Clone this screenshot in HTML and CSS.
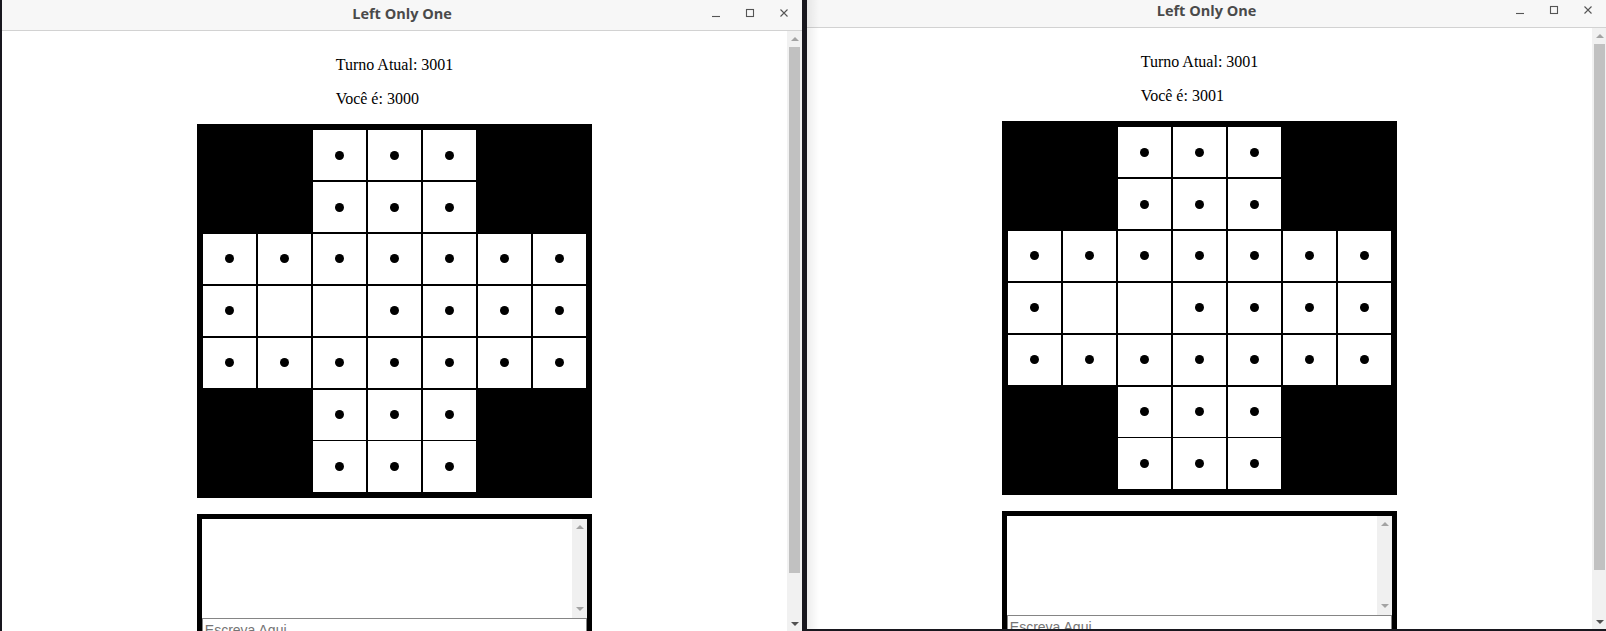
FILE: index.html
```html
<!DOCTYPE html>
<html lang="pt">
<head>
<meta charset="utf-8">
<title>Left Only One</title>
<link rel="stylesheet" href="styles.css">
</head>
<body>
<div class="desktop">

  <section class="window win-left">
    <header class="titlebar">
      <span class="tb-side"></span>
      <h1 class="title">Left Only One</h1>
      <div class="controls">
        <span class="ctl"><svg width="10" height="10" viewBox="0 0 10 10"><path d="M1 8.5H9" /></svg></span>
        <span class="ctl"><svg width="10" height="10" viewBox="0 0 10 10"><rect x="1.5" y="1.5" width="7" height="7" /></svg></span>
        <span class="ctl"><svg width="10" height="10" viewBox="0 0 10 10"><path d="M1.5 1.5L8.5 8.5M8.5 1.5L1.5 8.5" /></svg></span>
      </div>
    </header>
    <div class="viewport">
      <main class="page">
        <div class="status">
          <p>Turno Atual: 3001</p>
          <p>Você é: 3000</p>
        </div>
        <div class="board">
          <span class="cell void"></span><span class="cell void"></span><span class="cell peg"></span><span class="cell peg"></span><span class="cell peg"></span><span class="cell void"></span><span class="cell void"></span>
          <span class="cell void"></span><span class="cell void"></span><span class="cell peg"></span><span class="cell peg"></span><span class="cell peg"></span><span class="cell void"></span><span class="cell void"></span>
          <span class="cell peg"></span><span class="cell peg"></span><span class="cell peg"></span><span class="cell peg"></span><span class="cell peg"></span><span class="cell peg"></span><span class="cell peg"></span>
          <span class="cell peg"></span><span class="cell"></span><span class="cell"></span><span class="cell peg"></span><span class="cell peg"></span><span class="cell peg"></span><span class="cell peg"></span>
          <span class="cell peg"></span><span class="cell peg"></span><span class="cell peg"></span><span class="cell peg"></span><span class="cell peg"></span><span class="cell peg"></span><span class="cell peg"></span>
          <span class="cell void"></span><span class="cell void"></span><span class="cell peg"></span><span class="cell peg"></span><span class="cell peg"></span><span class="cell void"></span><span class="cell void"></span>
          <span class="cell void"></span><span class="cell void"></span><span class="cell peg"></span><span class="cell peg"></span><span class="cell peg"></span><span class="cell void"></span><span class="cell void"></span>
        </div>
        <div class="chat">
          <div class="log">
            <div class="log-text"></div>
            <div class="mini-scroll">
              <span class="arrow up light"></span>
              <span class="arrow down light"></span>
            </div>
          </div>
          <input class="msg" type="text" placeholder="Escreva Aqui">
        </div>
      </main>
      <div class="scrollbar">
        <span class="sb-btn"><span class="arrow up light"></span></span>
        <span class="thumb"></span>
        <span class="sb-fill"></span>
        <span class="sb-btn"><span class="arrow down"></span></span>
      </div>
    </div>
  </section>

  <section class="window win-right">
    <header class="titlebar">
      <span class="tb-side"></span>
      <h1 class="title">Left Only One</h1>
      <div class="controls">
        <span class="ctl"><svg width="10" height="10" viewBox="0 0 10 10"><path d="M1 8.5H9" /></svg></span>
        <span class="ctl"><svg width="10" height="10" viewBox="0 0 10 10"><rect x="1.5" y="1.5" width="7" height="7" /></svg></span>
        <span class="ctl"><svg width="10" height="10" viewBox="0 0 10 10"><path d="M1.5 1.5L8.5 8.5M8.5 1.5L1.5 8.5" /></svg></span>
      </div>
    </header>
    <div class="viewport">
      <main class="page">
        <div class="status">
          <p>Turno Atual: 3001</p>
          <p>Você é: 3001</p>
        </div>
        <div class="board">
          <span class="cell void"></span><span class="cell void"></span><span class="cell peg"></span><span class="cell peg"></span><span class="cell peg"></span><span class="cell void"></span><span class="cell void"></span>
          <span class="cell void"></span><span class="cell void"></span><span class="cell peg"></span><span class="cell peg"></span><span class="cell peg"></span><span class="cell void"></span><span class="cell void"></span>
          <span class="cell peg"></span><span class="cell peg"></span><span class="cell peg"></span><span class="cell peg"></span><span class="cell peg"></span><span class="cell peg"></span><span class="cell peg"></span>
          <span class="cell peg"></span><span class="cell"></span><span class="cell"></span><span class="cell peg"></span><span class="cell peg"></span><span class="cell peg"></span><span class="cell peg"></span>
          <span class="cell peg"></span><span class="cell peg"></span><span class="cell peg"></span><span class="cell peg"></span><span class="cell peg"></span><span class="cell peg"></span><span class="cell peg"></span>
          <span class="cell void"></span><span class="cell void"></span><span class="cell peg"></span><span class="cell peg"></span><span class="cell peg"></span><span class="cell void"></span><span class="cell void"></span>
          <span class="cell void"></span><span class="cell void"></span><span class="cell peg"></span><span class="cell peg"></span><span class="cell peg"></span><span class="cell void"></span><span class="cell void"></span>
        </div>
        <div class="chat">
          <div class="log">
            <div class="log-text"></div>
            <div class="mini-scroll">
              <span class="arrow up light"></span>
              <span class="arrow down light"></span>
            </div>
          </div>
          <input class="msg" type="text" placeholder="Escreva Aqui">
        </div>
      </main>
      <div class="scrollbar">
        <span class="sb-btn"><span class="arrow up light"></span></span>
        <span class="thumb"></span>
        <span class="sb-fill"></span>
        <span class="sb-btn"><span class="arrow down"></span></span>
      </div>
    </div>
  </section>

</div>
</body>
</html>
```

FILE: styles.css
```css
* {
  box-sizing: border-box;
}

html, body {
  margin: 0;
  padding: 0;
  width: 1606px;
  height: 631px;
  overflow: hidden;
  background: #18171e;
}

.desktop {
  display: flex;
  align-items: flex-start;
  gap: 5px;
  padding-left: 2px;
  height: 631px;
}

.window {
  display: flex;
  flex-direction: column;
  background: #ffffff;
  overflow: hidden;
  position: relative;
}

.win-left {
  width: 800px;
  height: 631px;
}

.win-right {
  width: 799px;
  height: 629px;
}

.win-right::before {
  content: "";
  position: absolute;
  left: 0;
  top: 0;
  bottom: 0;
  width: 12px;
  background: linear-gradient(to right, rgba(0, 0, 0, 0.07), rgba(0, 0, 0, 0));
  pointer-events: none;
  z-index: 2;
}

/* ---------- title bar ---------- */
.titlebar {
  flex: none;
  display: grid;
  grid-template-columns: 1fr auto 1fr;
  align-items: start;
  background: #f7f7f7;
  border-bottom: 1px solid #d2d2d2;
}

.win-left .titlebar {
  height: 31px;
  padding-top: 3px;
}

.win-right .titlebar {
  height: 28px;
  padding-top: 0;
}

.title {
  margin: 0;
  font-family: "Open Sans", "Noto Sans", sans-serif;
  font-weight: 700;
  font-size: 14.5px;
  line-height: 21px;
  color: #4a4a4a;
  white-space: nowrap;
}

.controls {
  justify-self: end;
  display: flex;
  margin-right: 1px;
}

.ctl {
  width: 34px;
  height: 20px;
  display: flex;
  align-items: center;
  justify-content: center;
}

.ctl svg {
  display: block;
  fill: none;
  stroke: #555555;
  stroke-width: 1.1;
}

/* ---------- viewport ---------- */
.viewport {
  flex: 1;
  min-height: 0;
  display: flex;
}

.page {
  width: 785px;
  flex: none;
  padding: 9px 8px 8px;
  display: flex;
  flex-direction: column;
  align-items: center;
  overflow: hidden;
  font-family: "Liberation Serif", "Times New Roman", serif;
  font-size: 16px;
  color: #000000;
}

.status {
  width: max-content;
}

.status p {
  margin: 16px 0;
  line-height: normal;
}

/* ---------- board ---------- */
.board {
  flex: none;
  display: grid;
  grid-template-columns: repeat(7, 53.33px);
  grid-template-rows: repeat(7, 50.25px);
  gap: 1.67px;
  padding: 6px;
  background: #000000;
}

.cell {
  background: #ffffff;
  display: flex;
  align-items: center;
  justify-content: center;
}

.cell.void {
  background: transparent;
}

.cell.peg::after {
  content: "";
  width: 9px;
  height: 9px;
  border-radius: 50%;
  background: #000000;
}

/* ---------- chat ---------- */
.chat {
  flex: none;
  margin-top: 16px;
  width: 395.33px;
  border: 5.67px solid #000000;
  border-bottom: none;
  background: #ffffff;
}

.log {
  display: flex;
  height: 99px;
  background: #ffffff;
}

.log-text {
  flex: 1;
}

.mini-scroll {
  width: 15px;
  background: #f0f0f0;
  display: flex;
  flex-direction: column;
  align-items: center;
  justify-content: space-between;
  padding: 6px 0 7px;
}

.msg {
  display: block;
  width: 100%;
  margin: 0;
  border: 1px solid #858585;
  padding: 3px 2px 1px;
  font-family: "Liberation Sans", Arial, sans-serif;
  font-size: 14px;
  line-height: 17px;
  background: #ffffff;
  color: #000000;
  outline: none;
}

.msg::placeholder {
  color: #757575;
}

/* ---------- scrollbar ---------- */
.scrollbar {
  width: 15px;
  flex: none;
  background: #f1f1f1;
  display: flex;
  flex-direction: column;
}

.sb-btn {
  height: 15px;
  flex: none;
  display: flex;
  align-items: center;
  justify-content: center;
}

.thumb {
  flex: none;
  height: 526px;
  margin: 1px 2px 0;
  background: #c1c1c1;
}

.sb-fill {
  flex: 1;
}

.arrow {
  width: 0;
  height: 0;
  border-left: 4px solid transparent;
  border-right: 4px solid transparent;
}

.arrow.up {
  border-bottom: 4px solid #505050;
}

.arrow.down {
  border-top: 4px solid #505050;
}

.arrow.up.light {
  border-bottom-color: #a3a3a3;
}

.arrow.down.light {
  border-top-color: #a3a3a3;
}
```
